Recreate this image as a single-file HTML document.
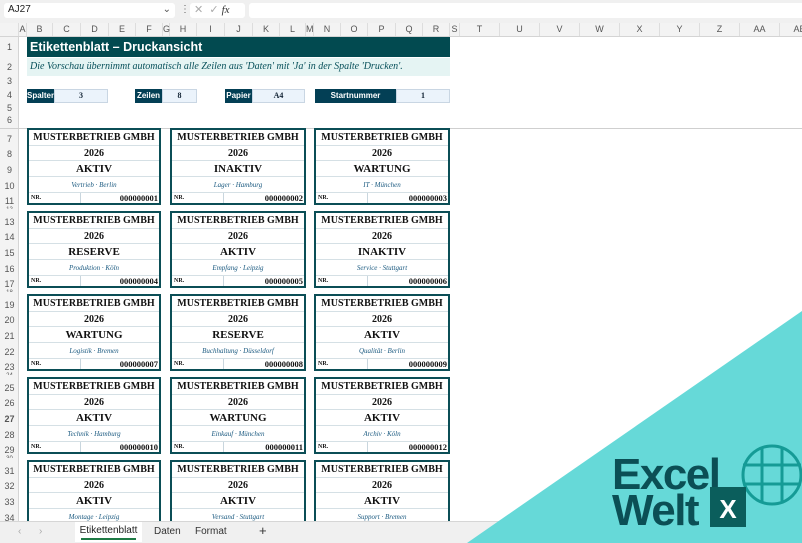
<!DOCTYPE html>
<html><head><meta charset="utf-8">
<style>
*{margin:0;padding:0;box-sizing:border-box}
body{width:802px;height:543px;overflow:hidden;background:#fff;position:relative;font-family:"Liberation Sans",sans-serif}
.a{position:absolute}
.top{left:0;top:0;width:802px;height:23px;background:#f0f0f0}
.nb{left:4px;top:3px;width:171px;height:15px;background:#fff;border-radius:3px;font-size:10px;color:#222;padding:1px 4px}
.fx{left:190px;top:3px;width:55px;height:15px;background:#fff;border-radius:3px;font-size:11px;color:#aaa;padding:0 4px}
.fb{left:249px;top:3px;width:553px;height:15px;background:#fff;border-radius:3px 0 0 3px}
.hdr{left:0;top:23px;width:802px;height:14px;background:#f3f3f3;border-bottom:1px solid #d4d4d4}
.ch{position:absolute;top:0;height:13px;font-size:9px;color:#555;text-align:center;line-height:13px;border-right:1px solid #ddd}
.rh{left:0;top:37px;width:19px;height:484px;background:#f3f3f3;border-right:1px solid #d4d4d4}
.rn{position:absolute;left:0;width:19px;font-size:9px;color:#555;text-align:center;line-height:10px}
.title{left:27px;top:37px;width:423px;height:20px;background:#024a50;color:#fff;font-weight:bold;font-size:12.5px;line-height:20px;padding-left:3px}
.sub{left:27px;top:58px;width:423px;height:18px;background:#e5f4f3;color:#07505a;font-style:italic;font-size:10px;line-height:18px;padding-left:3px;font-family:"Liberation Serif",serif}
.lab{top:89px;height:14px;background:#033f55;color:#fff;font-size:8px;font-weight:bold;line-height:14px;text-align:center}
.val{top:89px;height:14px;background:#ebf3fb;border:1px solid #c9d6e3;color:#123;font-size:8px;font-weight:bold;line-height:12px;text-align:center;font-family:"Liberation Serif",serif}
.frz{left:0;top:128px;width:802px;height:1px;background:#cfcfcf}
.card{position:absolute;height:77px;border:2px solid #0b4e56;font-family:"Liberation Serif",serif;color:#111;background:#fff}
.card div{border-bottom:1px solid #d5e0e5;text-align:center;font-weight:bold}
.r1{height:16px;font-size:10px;line-height:16px}
.r2{height:15px;font-size:10px;line-height:15px}
.r3{height:16px;font-size:11px;line-height:16px}
.r4{height:16px;font-size:7px;line-height:16px;font-weight:normal!important;font-style:italic;color:#1b5a80}
.card .r5{height:10px;border:none;display:flex;font-size:8.5px;line-height:10px;text-align:left}
.r5 span{display:block}
.r5 .n{width:52px;border-right:1px solid #c9d6de;padding-left:2px;font-size:6px}
.r5 .v{flex:1;text-align:right;padding-right:1px}
.tabs{left:0;top:521px;width:802px;height:22px;background:#f0f0f0;border-top:1px solid #d6d6d6;font-size:10px;color:#333}
</style></head><body>
<div class="a top"></div>
<div class="a nb">AJ27<span style="float:right;color:#555">⌄</span></div>
<div class="a" style="left:180px;top:4px;font-size:10px;color:#666">⋮</div>
<div class="a fx">✕&nbsp; ✓ <i style="color:#333;font-family:'Liberation Serif',serif">fx</i> ⌄</div>
<div class="a fb"></div>

<div class="a hdr">
<div class="ch" style="left:0;width:19px"></div>
<div class="ch" style="left:19px;width:8px">A</div>
<div class="ch" style="left:27px;width:26px">B</div>
<div class="ch" style="left:53px;width:28px">C</div>
<div class="ch" style="left:81px;width:28px">D</div>
<div class="ch" style="left:109px;width:27px">E</div>
<div class="ch" style="left:136px;width:27px">F</div>
<div class="ch" style="left:163px;width:7px">G</div>
<div class="ch" style="left:170px;width:27px">H</div>
<div class="ch" style="left:197px;width:28px">I</div>
<div class="ch" style="left:225px;width:28px">J</div>
<div class="ch" style="left:253px;width:27px">K</div>
<div class="ch" style="left:280px;width:26px">L</div>
<div class="ch" style="left:306px;width:8px">M</div>
<div class="ch" style="left:314px;width:27px">N</div>
<div class="ch" style="left:341px;width:27px">O</div>
<div class="ch" style="left:368px;width:28px">P</div>
<div class="ch" style="left:396px;width:27px">Q</div>
<div class="ch" style="left:423px;width:27px">R</div>
<div class="ch" style="left:450px;width:10px">S</div>
<div class="ch" style="left:460px;width:40px">T</div>
<div class="ch" style="left:500px;width:40px">U</div>
<div class="ch" style="left:540px;width:40px">V</div>
<div class="ch" style="left:580px;width:40px">W</div>
<div class="ch" style="left:620px;width:40px">X</div>
<div class="ch" style="left:660px;width:40px">Y</div>
<div class="ch" style="left:700px;width:40px">Z</div>
<div class="ch" style="left:740px;width:40px">AA</div>
<div class="ch" style="left:780px;width:40px">AB</div>
</div>

<div class="a rh">
<div class="rn" style="top:5px">1</div>
<div class="rn" style="top:25px">2</div>
<div class="rn" style="top:39px">3</div>
<div class="rn" style="top:53px">4</div>
<div class="rn" style="top:66px">5</div>
<div class="rn" style="top:78px">6</div>
<div class="rn" style="top:97px">7</div><div class="rn" style="top:112px">8</div><div class="rn" style="top:128px">9</div><div class="rn" style="top:144px">10</div><div class="rn" style="top:159px">11</div><div class="rn" style="top:168px;font-size:6px;height:4px;overflow:hidden">12</div>
<div class="rn" style="top:180px">13</div><div class="rn" style="top:195px">14</div><div class="rn" style="top:211px">15</div><div class="rn" style="top:227px">16</div><div class="rn" style="top:242px">17</div><div class="rn" style="top:251px;font-size:6px;height:4px;overflow:hidden">18</div>
<div class="rn" style="top:263px">19</div><div class="rn" style="top:278px">20</div><div class="rn" style="top:294px">21</div><div class="rn" style="top:310px">22</div><div class="rn" style="top:325px">23</div><div class="rn" style="top:334px;font-size:6px;height:4px;overflow:hidden">24</div>
<div class="rn" style="top:346px">25</div><div class="rn" style="top:361px">26</div><div class="rn" style="top:377px;font-weight:bold">27</div><div class="rn" style="top:393px">28</div><div class="rn" style="top:408px">29</div><div class="rn" style="top:417px;font-size:6px;height:4px;overflow:hidden">30</div>
<div class="rn" style="top:429px">31</div><div class="rn" style="top:444px">32</div><div class="rn" style="top:460px">33</div><div class="rn" style="top:476px">34</div>
</div>

<div class="a title">Etikettenblatt – Druckansicht</div>
<div class="a sub">Die Vorschau übernimmt automatisch alle Zeilen aus 'Daten' mit 'Ja' in der Spalte 'Drucken'.</div>
<div class="a lab" style="left:27px;width:27px">Spalten</div><div class="a val" style="left:54px;width:54px">3</div>
<div class="a lab" style="left:135px;width:27px">Zeilen</div><div class="a val" style="left:162px;width:35px">8</div>
<div class="a lab" style="left:225px;width:27px">Papier</div><div class="a val" style="left:252px;width:53px">A4</div>
<div class="a lab" style="left:315px;width:81px">Startnummer</div><div class="a val" style="left:396px;width:54px">1</div>
<div class="a frz"></div>

<div class="card" style="left:27px;top:128px;width:134px"><div class="r1">MUSTERBETRIEB GMBH</div><div class="r2">2026</div><div class="r3">AKTIV</div><div class="r4">Vertrieb · Berlin</div><div class="r5"><span class="n">NR.</span><span class="v">000000001</span></div></div>
<div class="card" style="left:170px;top:128px;width:136px"><div class="r1">MUSTERBETRIEB GMBH</div><div class="r2">2026</div><div class="r3">INAKTIV</div><div class="r4">Lager · Hamburg</div><div class="r5"><span class="n">NR.</span><span class="v">000000002</span></div></div>
<div class="card" style="left:314px;top:128px;width:136px"><div class="r1">MUSTERBETRIEB GMBH</div><div class="r2">2026</div><div class="r3">WARTUNG</div><div class="r4">IT · München</div><div class="r5"><span class="n">NR.</span><span class="v">000000003</span></div></div>

<div class="card" style="left:27px;top:211px;width:134px"><div class="r1">MUSTERBETRIEB GMBH</div><div class="r2">2026</div><div class="r3">RESERVE</div><div class="r4">Produktion · Köln</div><div class="r5"><span class="n">NR.</span><span class="v">000000004</span></div></div>
<div class="card" style="left:170px;top:211px;width:136px"><div class="r1">MUSTERBETRIEB GMBH</div><div class="r2">2026</div><div class="r3">AKTIV</div><div class="r4">Empfang · Leipzig</div><div class="r5"><span class="n">NR.</span><span class="v">000000005</span></div></div>
<div class="card" style="left:314px;top:211px;width:136px"><div class="r1">MUSTERBETRIEB GMBH</div><div class="r2">2026</div><div class="r3">INAKTIV</div><div class="r4">Service · Stuttgart</div><div class="r5"><span class="n">NR.</span><span class="v">000000006</span></div></div>

<div class="card" style="left:27px;top:294px;width:134px"><div class="r1">MUSTERBETRIEB GMBH</div><div class="r2">2026</div><div class="r3">WARTUNG</div><div class="r4">Logistik · Bremen</div><div class="r5"><span class="n">NR.</span><span class="v">000000007</span></div></div>
<div class="card" style="left:170px;top:294px;width:136px"><div class="r1">MUSTERBETRIEB GMBH</div><div class="r2">2026</div><div class="r3">RESERVE</div><div class="r4">Buchhaltung · Düsseldorf</div><div class="r5"><span class="n">NR.</span><span class="v">000000008</span></div></div>
<div class="card" style="left:314px;top:294px;width:136px"><div class="r1">MUSTERBETRIEB GMBH</div><div class="r2">2026</div><div class="r3">AKTIV</div><div class="r4">Qualität · Berlin</div><div class="r5"><span class="n">NR.</span><span class="v">000000009</span></div></div>

<div class="card" style="left:27px;top:377px;width:134px"><div class="r1">MUSTERBETRIEB GMBH</div><div class="r2">2026</div><div class="r3">AKTIV</div><div class="r4">Technik · Hamburg</div><div class="r5"><span class="n">NR.</span><span class="v">000000010</span></div></div>
<div class="card" style="left:170px;top:377px;width:136px"><div class="r1">MUSTERBETRIEB GMBH</div><div class="r2">2026</div><div class="r3">WARTUNG</div><div class="r4">Einkauf · München</div><div class="r5"><span class="n">NR.</span><span class="v">000000011</span></div></div>
<div class="card" style="left:314px;top:377px;width:136px"><div class="r1">MUSTERBETRIEB GMBH</div><div class="r2">2026</div><div class="r3">AKTIV</div><div class="r4">Archiv · Köln</div><div class="r5"><span class="n">NR.</span><span class="v">000000012</span></div></div>

<div class="card" style="left:27px;top:460px;width:134px"><div class="r1">MUSTERBETRIEB GMBH</div><div class="r2">2026</div><div class="r3">AKTIV</div><div class="r4">Montage · Leipzig</div><div class="r5"><span class="n">NR.</span><span class="v">000000013</span></div></div>
<div class="card" style="left:170px;top:460px;width:136px"><div class="r1">MUSTERBETRIEB GMBH</div><div class="r2">2026</div><div class="r3">AKTIV</div><div class="r4">Versand · Stuttgart</div><div class="r5"><span class="n">NR.</span><span class="v">000000014</span></div></div>
<div class="card" style="left:314px;top:460px;width:136px"><div class="r1">MUSTERBETRIEB GMBH</div><div class="r2">2026</div><div class="r3">AKTIV</div><div class="r4">Support · Bremen</div><div class="r5"><span class="n">NR.</span><span class="v">000000015</span></div></div>

<div class="a tabs">
<span class="a" style="left:18px;top:4px;color:#aaa">‹</span>
<span class="a" style="left:39px;top:4px;color:#aaa">›</span>
<span class="a" style="left:75px;top:0;width:67px;height:20px;background:#fff;text-align:center;line-height:18px;color:#222">Etikettenblatt<span class="a" style="left:6px;top:16px;width:55px;height:2px;background:#1e7a45"></span></span>
<span class="a" style="left:154px;top:4px">Daten</span>
<span class="a" style="left:195px;top:4px">Format</span>
<span class="a" style="left:259px;top:1px;font-size:13px">+</span>
</div>

<svg class="a" style="left:0;top:0" width="802" height="543">
<polygon points="802,311 802,543 467,543" fill="#66d9d8"/>
<text x="612" y="489" font-family="Liberation Sans" font-weight="bold" font-size="44" fill="#0b4f55" letter-spacing="-1.5">Excel</text>
<text x="612" y="525" font-family="Liberation Sans" font-weight="bold" font-size="44" fill="#0b4f55" letter-spacing="-1.5">Welt</text>
<g fill="none" stroke="#159b96" stroke-width="3">
<circle cx="772" cy="475" r="29"/>
<line x1="743" y1="465" x2="801" y2="465"/>
<line x1="743" y1="484" x2="801" y2="484"/>
<line x1="762" y1="447" x2="762" y2="503"/>
<line x1="782" y1="447" x2="782" y2="503"/>
</g>
<rect x="710" y="487" width="36" height="40" fill="#0b5e5c"/>
<text x="728" y="518" text-anchor="middle" font-family="Liberation Sans" font-weight="bold" font-size="26" fill="#fff">X</text>
</svg>
</body></html>
